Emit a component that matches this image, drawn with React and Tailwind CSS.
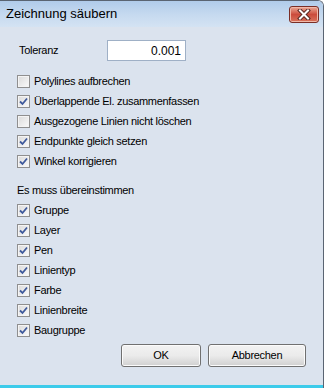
import { useState } from "react";

function Check({ checked, label, onToggle }) {
  return (
    <label className="flex h-[20px] cursor-default items-center" onClick={onToggle}>
      <span className="relative ml-[17px] flex h-[13px] w-[13px] items-center justify-center border border-[#8f8f8f] bg-gradient-to-br from-[#dadada] to-[#fbfbfb] shadow-[inset_0_0_0_1px_#f4f4f4]">
        {checked && (
          <svg width="9" height="9" viewBox="0 0 9 9" className="absolute left-[1px] top-[1px]">
            <path d="M1 4.5 L3.5 7 L8 1.5" fill="none" stroke="#3f5a9c" strokeWidth="1.8" />
          </svg>
        )}
      </span>
      <span className="ml-[4px] text-[11px] leading-none tracking-[-0.3px] text-black">{label}</span>
    </label>
  );
}

function Button({ children, className }) {
  return (
    <button
      type="button"
      className={
        "h-[23px] rounded-[3px] border border-[#707070] bg-gradient-to-b from-[#f2f2f2] via-[#ebebeb] to-[#d0d0d0] text-[11px] tracking-[-0.3px] text-black shadow-[inset_0_0_0_1px_#fbfbfb] " +
        className
      }
    >
      {children}
    </button>
  );
}

export default function App() {
  const [opts, setOpts] = useState({
    poly: false,
    overlap: true,
    drawn: false,
    ends: true,
    angle: true,
  });
  const [match, setMatch] = useState({
    Gruppe: true,
    Layer: true,
    Pen: true,
    Linientyp: true,
    Farbe: true,
    Linienbreite: true,
    Baugruppe: true,
  });
  const [tol, setTol] = useState("0.001");

  const top = [
    ["poly", "Polylines aufbrechen"],
    ["overlap", "Überlappende El. zusammenfassen"],
    ["drawn", "Ausgezogene Linien nicht löschen"],
    ["ends", "Endpunkte gleich setzen"],
    ["angle", "Winkel korrigieren"],
  ];

  return (
    <div className="h-[388px] w-[327px] overflow-hidden bg-white font-['Liberation_Sans',Arial,sans-serif]">
      <div className="flex h-[388px] w-[324px] flex-col overflow-hidden rounded-tr-[6px] border-r border-t border-[#5a6472]">
        <div className="flex h-[26px] shrink-0 items-center justify-between bg-gradient-to-b from-[#b0cbea] via-[#c5d9ef] to-[#d4e3f3] pl-[6px] pr-[4px]">
          <span className="text-[13px] text-black">Zeichnung säubern</span>
          <span className="mt-[1px] flex h-[17px] w-[30px] items-center justify-center rounded-[3px] border border-[#7a2e26] bg-gradient-to-b from-[#e9a896] via-[#cb4b3c] to-[#d9735c] shadow-[inset_0_0_0_1px_#f0b8a8]">
            <svg width="14" height="11" viewBox="0 0 14 11">
              <path d="M3 1.5 L11 9.5 M11 1.5 L3 9.5" stroke="#5a2a24" strokeWidth="4" strokeLinecap="square" />
              <path d="M3 1.5 L11 9.5 M11 1.5 L3 9.5" stroke="#ffffff" strokeWidth="2" strokeLinecap="square" />
            </svg>
          </span>
        </div>

        <div className="flex flex-1 flex-col border-b-[3px] border-b-[#3ccbea] bg-[#dbe3ee]">
          <div className="mt-[13px] flex h-[21px] items-center">
            <span className="ml-[19px] w-[88px] text-[11px] tracking-[-0.3px] text-black">Toleranz</span>
            <input
              className="h-[21px] w-[79px] border border-[#9fb0c6] bg-white pr-[4px] text-right text-[12px] text-black outline-none"
              value={tol}
              onChange={(e) => setTol(e.target.value)}
            />
          </div>

          <div className="mt-[10px] flex flex-col">
            {top.map(([k, l]) => (
              <Check
                key={k}
                label={l}
                checked={opts[k]}
                onToggle={() => setOpts({ ...opts, [k]: !opts[k] })}
              />
            ))}
          </div>

          <div className="ml-[17px] mt-[9px] flex h-[20px] items-center text-[11px] tracking-[-0.3px] text-black">
            Es muss übereinstimmen
          </div>

          <div className="flex flex-col">
            {Object.keys(match).map((k) => (
              <Check
                key={k}
                label={k}
                checked={match[k]}
                onToggle={() => setMatch({ ...match, [k]: !match[k] })}
              />
            ))}
          </div>

          <div className="mt-[4px] flex justify-end gap-[7px] pr-[17px]">
            <Button className="w-[80px]">OK</Button>
            <Button className="w-[98px]">Abbrechen</Button>
          </div>
        </div>
      </div>
    </div>
  );
}
